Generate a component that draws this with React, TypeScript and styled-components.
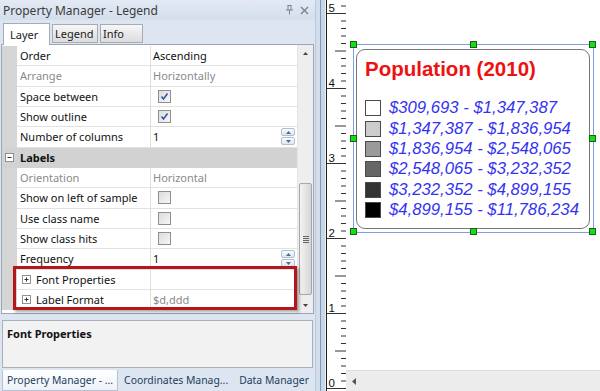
import React, {FC} from 'react';
import styled, {createGlobalStyle} from 'styled-components';

const GlobalStyle = createGlobalStyle`
    html, body {
        margin: 0;
        padding: 0;
        background: #fff;
    }
    body {
        width: 600px;
        height: 391px;
        overflow: hidden;
        font-family: "Noto Sans", "Liberation Sans", sans-serif;
    }
`;

const Screen = styled.div`
    display: flex;
    width: 600px;
    height: 391px;
    overflow: hidden;
`;

// ---- left docked panel ----
const Panel = styled.div`
    position: relative;
    width: 315px;
    flex-shrink: 0;
    display: flex;
    flex-direction: column;
    background: #dde5f0;
`;
const TitleBar = styled.div`
    height: 20px;
    display: flex;
    align-items: center;
    padding: 0 6px 0 3px;
    background: linear-gradient(#e3eaf5, #d4deec);
    color: #3b3b3b;
    font-size: 12px;
`;
const TitleText = styled.span`
    flex: 1;
`;
const TitleIcons = styled.div`
    display: flex;
    gap: 6px;
    align-items: center;
`;
const TabStrip = styled.div`
    height: 24px;
    display: flex;
    align-items: flex-end;
    gap: 2px;
    padding-left: 3px;
    box-sizing: border-box;
`;
const Tab = styled.div<{$active?: boolean; $w: number}>`
    width: ${(p) => p.$w}px;
    height: ${(p) => (p.$active ? 22 : 19)}px;
    box-sizing: border-box;
    padding-left: ${(p) => (p.$active ? 6 : 2)}px;
    margin-bottom: ${(p) => (p.$active ? -1 : 1)}px;
    display: flex;
    align-items: center;
    font-size: 11px;
    color: #1b1b1b;
    white-space: nowrap;
    overflow: hidden;
    background: ${(p) => (p.$active ? '#fff' : 'linear-gradient(#f7f7f7, #dcdcdc)')};
    border: 1px solid #a4acb7;
    border-bottom: ${(p) => (p.$active ? 'none' : '1px solid #a4acb7')};
    position: relative;
    z-index: ${(p) => (p.$active ? 2 : 1)};
`;
const GridFrame = styled.div`
    height: 270px;
    margin-left: 1px;
    width: 313px;
    box-sizing: border-box;
    border: 1px solid #9ca6b4;
    background: #fff;
    display: flex;
`;
const Rows = styled.div`
    width: 295px;
    padding-top: 1px;
    display: flex;
    flex-direction: column;
    background: #fff;
`;
const Row = styled.div<{$category?: boolean}>`
    height: 20.33px;
    box-sizing: border-box;
    display: grid;
    grid-template-columns: 15px 134px 1fr;
    font-size: 11px;
    color: #111;
    background: ${(p) => (p.$category ? '#d2d2d2' : '#fff')};
`;
const Gutter = styled.div<{$clear?: boolean}>`
    background: ${(p) => (p.$clear ? 'transparent' : '#d5d5d5')};
    display: flex;
    align-items: center;
    justify-content: center;
`;
const NameCell = styled.div<{$muted?: boolean; $indent?: boolean}>`
    display: flex;
    align-items: center;
    gap: 5px;
    padding-left: ${(p) => (p.$indent ? 5 : 3)}px;
    color: ${(p) => (p.$muted ? '#8a8a8a' : '#111')};
    border-right: 1px solid #dedede;
    border-bottom: 1px solid #e2e2e2;
    white-space: nowrap;
`;
const CategoryName = styled.div`
    display: flex;
    align-items: center;
    padding-left: 3px;
    font-weight: 700;
    color: #111;
`;
const ValueCell = styled.div<{$muted?: boolean}>`
    display: flex;
    align-items: center;
    padding-left: 2px;
    padding-right: 2px;
    color: ${(p) => (p.$muted ? '#8a8a8a' : '#111')};
    border-bottom: 1px solid #e2e2e2;
`;
const ValueText = styled.span`
    flex: 1;
`;
const Check = styled.div`
    width: 13px;
    height: 13px;
    margin-left: 5px;
    box-sizing: border-box;
    border: 1px solid #8e8f8f;
    background: linear-gradient(135deg, #dcdcdc, #f6f6f6);
    display: flex;
    align-items: center;
    justify-content: center;
`;
const Spin = styled.div`
    display: flex;
    flex-direction: column;
    gap: 1px;
`;
const SpinBtn = styled.div`
    width: 14px;
    height: 8px;
    box-sizing: border-box;
    border: 1px solid #b3bfcf;
    border-radius: 2px;
    background: linear-gradient(#fafcff, #dfe6ef);
    display: flex;
    align-items: center;
    justify-content: center;
`;
const ExpandBox = styled.div`
    width: 9px;
    height: 9px;
    box-sizing: border-box;
    border: 1px solid #919191;
    background: #fff;
    display: flex;
    align-items: center;
    justify-content: center;
    flex-shrink: 0;
`;
const VScroll = styled.div`
    width: 16px;
    display: flex;
    flex-direction: column;
    align-items: center;
    background: #eeeeee;
    border-left: 1px solid #e4e4e4;
    box-sizing: border-box;
`;
const ScrollArrow = styled.div`
    height: 16px;
    width: 100%;
    display: flex;
    align-items: center;
    justify-content: center;
`;
const ScrollTrack = styled.div`
    flex: 1;
    width: 100%;
    display: flex;
    flex-direction: column;
    justify-content: flex-end;
    padding-bottom: 2px;
    box-sizing: border-box;
`;
const Thumb = styled.div`
    height: 110px;
    margin: 0 1px;
    border: 1px solid #a7a7a7;
    border-radius: 2px;
    background: linear-gradient(to right, #f3f3f3, #d6d6d6);
    display: flex;
    align-items: center;
    justify-content: center;
`;
const Grip = styled.div`
    width: 6px;
    height: 7px;
    background: repeating-linear-gradient(#666 0 1px, transparent 1px 2px);
`;
const Description = styled.div`
    height: 48px;
    margin: 6px 0 2px 2px;
    width: 311px;
    box-sizing: border-box;
    border: 1px solid #a8b0bc;
    background: #f2f2f2;
    padding: 5px 4px;
    font-size: 11px;
    font-weight: 700;
    color: #111;
`;
const BottomTabs = styled.div`
    height: 21px;
    display: flex;
    align-items: stretch;
    padding-left: 2px;
`;
const BottomTab = styled.div<{$active?: boolean}>`
    display: flex;
    align-items: center;
    padding: 0 4px;
    margin-right: 1px;
    font-size: 10.4px;
    color: #223d60;
    white-space: nowrap;
    background: ${(p) => (p.$active ? 'linear-gradient(#ffffff, #eef2f7)' : 'transparent')};
    border: ${(p) => (p.$active ? '1px solid #b7c3d3' : '1px solid transparent')};
    border-top: none;
`;
const Highlight = styled.div`
    position: absolute;
    left: 13px;
    top: 266px;
    width: 284px;
    height: 44px;
    box-sizing: border-box;
    border: 3px solid #b4161b;
    box-shadow: 2px 2px 3px rgba(0, 0, 0, 0.35);
    pointer-events: none;
`;

// ---- splitter + ruler ----
const Splitter = styled.div`
    width: 11px;
    flex-shrink: 0;
    background: linear-gradient(to right, #b9cae0 0 1px, #d3deec 1px 5px, #7f98bb 5px 6px, #c9d6e7 6px 10px, #e9eef5 10px);
`;
const RulerBox = styled.div`
    width: 19px;
    flex-shrink: 0;
    background: #fff;
    border-left: 1px solid #222;
`;

// ---- drawing canvas ----
const Canvas = styled.div`
    flex: 1;
    display: flex;
    flex-direction: column;
    background: #fff;
`;
const Sheet = styled.div`
    flex: 1;
    padding: 44px 0 0 7px;
`;
const HScroll = styled.div`
    height: 21px;
    background: #ececec;
    border-top: 1px solid #dddddd;
    box-sizing: border-box;
    display: flex;
    align-items: center;
    padding-left: 6px;
`;
const Selection = styled.div`
    position: relative;
    width: 241px;
    height: 189px;
    box-sizing: border-box;
    border: 1px solid #7f9ee6;
    padding: 4px 3px 3px 2px;
`;
const Handle = styled.div<{$x: string; $y: string}>`
    position: absolute;
    left: ${(p) => p.$x};
    top: ${(p) => p.$y};
    width: 7px;
    height: 7px;
    margin: -4px 0 0 -4px;
    box-sizing: border-box;
    background: #12e012;
    border: 1px solid #1f5c1f;
`;
const LegendBox = styled.div`
    height: 100%;
    box-sizing: border-box;
    border: 1px solid #777;
    border-radius: 9px;
    padding: 7px 0 0 8px;
    font-family: "Liberation Sans", Arial, sans-serif;
`;
const LegendTitle = styled.div`
    color: #ee1111;
    font-size: 20.5px;
    font-weight: 700;
    line-height: 24px;
    margin-bottom: 17px;
`;
const LegendRow = styled.div`
    height: 20.4px;
    display: flex;
    align-items: center;
    gap: 8px;
`;
const Swatch = styled.div<{$c: string}>`
    width: 16px;
    height: 16px;
    box-sizing: border-box;
    border: 1px solid #4a4a4a;
    background: ${(p) => p.$c};
`;
const RangeText = styled.span`
    color: #3434f0;
    font-style: italic;
    font-size: 16.7px;
`;

type Prop =
    | {kind: 'cat'; name: string}
    | {kind: 'check'; name: string; checked: boolean}
    | {kind: 'text'; name: string; value: string; muted?: boolean; spin?: boolean; expand?: boolean};

const rows: Prop[] = [
    {kind: 'text', name: 'Order', value: 'Ascending'},
    {kind: 'text', name: 'Arrange', value: 'Horizontally', muted: true},
    {kind: 'check', name: 'Space between', checked: true},
    {kind: 'check', name: 'Show outline', checked: true},
    {kind: 'text', name: 'Number of columns', value: '1', spin: true},
    {kind: 'cat', name: 'Labels'},
    {kind: 'text', name: 'Orientation', value: 'Horizontal', muted: true},
    {kind: 'check', name: 'Show on left of sample', checked: false},
    {kind: 'check', name: 'Use class name', checked: false},
    {kind: 'check', name: 'Show class hits', checked: false},
    {kind: 'text', name: 'Frequency', value: '1', spin: true},
    {kind: 'text', name: 'Font Properties', value: '', expand: true},
    {kind: 'text', name: 'Label Format', value: '$d,ddd', muted: true, expand: true},
];

const legend = [
    {c: '#ffffff', t: '$309,693 - $1,347,387'},
    {c: '#cccccc', t: '$1,347,387 - $1,836,954'},
    {c: '#9a9a9a', t: '$1,836,954 - $2,548,065'},
    {c: '#666666', t: '$2,548,065 - $3,232,352'},
    {c: '#333333', t: '$3,232,352 - $4,899,155'},
    {c: '#000000', t: '$4,899,155 - $11,786,234'},
];

const Tri: FC<{up?: boolean; color?: string}> = ({up, color = '#4d6b9a'}) => (
    <svg width='5' height='3' viewBox='0 0 5 3'>
        <path d={up ? 'M0 3 L2.5 0 L5 3Z' : 'M0 0 L5 0 L2.5 3Z'} fill={color}/>
    </svg>
);

const Sign: FC<{plus?: boolean}> = ({plus}) => (
    <svg width='7' height='7' viewBox='0 0 7 7'>
        <path d={plus ? 'M1.5 3.5H5.5M3.5 1.5V5.5' : 'M1.5 3.5H5.5'} stroke='#333' strokeWidth='1'/>
    </svg>
);

const PropRow: FC<{row: Prop}> = ({row}) => {
    if (row.kind === 'cat') {
        return (
            <Row $category={true}>
                <Gutter $clear={true}>
                    <ExpandBox><Sign/></ExpandBox>
                </Gutter>
                <CategoryName>{row.name}</CategoryName>
                <div/>
            </Row>
        );
    }
    if (row.kind === 'check') {
        return (
            <Row>
                <Gutter/>
                <NameCell>{row.name}</NameCell>
                <ValueCell>
                    <Check>
                        {row.checked && (
                            <svg width='9' height='9' viewBox='0 0 9 9'>
                                <path d='M1.5 4.5 L3.5 7 L7.5 1.5' stroke='#2c4f9e' strokeWidth='1.4' fill='none'/>
                            </svg>
                        )}
                    </Check>
                </ValueCell>
            </Row>
        );
    }
    return (
        <Row>
            <Gutter/>
            <NameCell $muted={row.muted && !row.expand} $indent={row.expand}>
                {row.expand && <ExpandBox><Sign plus={true}/></ExpandBox>}
                {row.name}
            </NameCell>
            <ValueCell $muted={row.muted}>
                <ValueText>{row.value}</ValueText>
                {row.spin && (
                    <Spin>
                        <SpinBtn><Tri up={true}/></SpinBtn>
                        <SpinBtn><Tri/></SpinBtn>
                    </Spin>
                )}
            </ValueCell>
        </Row>
    );
};

const Ruler: FC = () => {
    const zero = 388;
    const unit = 75;
    const ticks = [];
    const labels = [];
    for (let i = 0; i <= 52; i++) {
        const y = zero - (i * unit) / 10;
        if (y < 0) {
            break;
        }
        let len = 5;
        if (i % 10 === 0) {
            len = 19;
        } else if (i % 5 === 0) {
            len = 11;
        }
        ticks.push(<line key={i} x1={19 - len} x2={19} y1={y + 0.5} y2={y + 0.5} stroke='#333' strokeWidth='1'/>);
        if (i % 10 === 0) {
            labels.push(
                <text key={`l${i}`} x='1.5' y={y - 1.5} fontSize='11.5' fill='#111' fontFamily='Liberation Sans, sans-serif'>
                    {i / 10}
                </text>,
            );
        }
    }
    return (
        <svg width='19' height='391' viewBox='0 0 19 391'>
            {ticks}
            {labels}
        </svg>
    );
};

const handles: [string, string][] = [
    ['0px', '0px'], ['50%', '0px'], ['100%', '0px'],
    ['0px', '50%'], ['100%', '50%'],
    ['0px', '100%'], ['50%', '100%'], ['100%', '100%'],
];

const App: FC = () => {
    return (
        <>
            <GlobalStyle/>
            <Screen>
                <Panel>
                    <TitleBar>
                        <TitleText>{'Property Manager - Legend'}</TitleText>
                        <TitleIcons>
                            <svg width='9' height='10' viewBox='0 0 9 10'>
                                <path d='M2.5 0.5H6.5M3 0.5V5M6 0.5V5M1 5H8M4.5 5V9.5' stroke='#7a8291' strokeWidth='1' fill='none'/>
                            </svg>
                            <svg width='9' height='9' viewBox='0 0 9 9'>
                                <path d='M1 1L8 8M8 1L1 8' stroke='#7a8291' strokeWidth='1.4'/>
                            </svg>
                        </TitleIcons>
                    </TitleBar>
                    <TabStrip>
                        <Tab $active={true} $w={47}>{'Layer'}</Tab>
                        <Tab $w={46}>{'Legend'}</Tab>
                        <Tab $w={43}>{'Info'}</Tab>
                    </TabStrip>
                    <GridFrame>
                        <Rows>
                            {rows.map((r) => <PropRow key={r.name} row={r}/>)}
                        </Rows>
                        <VScroll>
                            <ScrollArrow><Tri up={true} color='#444'/></ScrollArrow>
                            <ScrollTrack>
                                <Thumb><Grip/></Thumb>
                            </ScrollTrack>
                            <ScrollArrow><Tri color='#444'/></ScrollArrow>
                        </VScroll>
                    </GridFrame>
                    <Description>{'Font Properties'}</Description>
                    <BottomTabs>
                        <BottomTab $active={true}>{'Property Manager - ...'}</BottomTab>
                        <BottomTab>{'Coordinates Manag...'}</BottomTab>
                        <BottomTab>{'Data Manager'}</BottomTab>
                    </BottomTabs>
                    <Highlight/>
                </Panel>
                <Splitter/>
                <RulerBox><Ruler/></RulerBox>
                <Canvas>
                    <Sheet>
                        <Selection>
                            <LegendBox>
                                <LegendTitle>{'Population (2010)'}</LegendTitle>
                                {legend.map((l) => (
                                    <LegendRow key={l.t}>
                                        <Swatch $c={l.c}/>
                                        <RangeText>{l.t}</RangeText>
                                    </LegendRow>
                                ))}
                            </LegendBox>
                            {handles.map(([x, y]) => <Handle key={`${x}${y}`} $x={x} $y={y}/>)}
                        </Selection>
                    </Sheet>
                    <HScroll>
                        <svg width='4' height='7' viewBox='0 0 4 7'>
                            <path d='M4 0L0 3.5L4 7Z' fill='#555'/>
                        </svg>
                    </HScroll>
                </Canvas>
            </Screen>
        </>
    );
};

export default App;
